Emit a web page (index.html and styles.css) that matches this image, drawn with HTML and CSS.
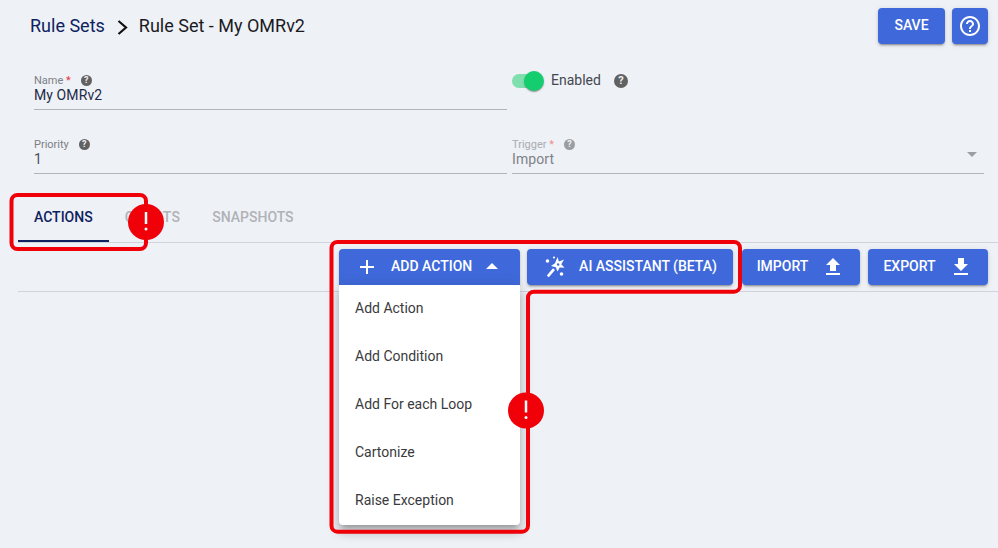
FILE: index.html
```html
<!DOCTYPE html>
<html lang="en">
<head>
<meta charset="utf-8">
<title>Rule Set - My OMRv2</title>
<link rel="stylesheet" href="styles.css">
</head>
<body>
<div class="page">
  <header class="top">
    <nav class="crumbs">
      <span class="crumb-link">Rule Sets</span>
      <svg class="crumb-sep" viewBox="0 0 24 24"><path d="M8.500 7 16 13.500 8.500 20"/></svg>
      <span class="crumb-current">Rule Set - My OMRv2</span>
    </nav>
    <div class="top-actions">
      <button class="btn btn-save"><span>SAVE</span></button>
      <button class="btn btn-help" aria-label="Help">
        <svg viewBox="0 0 24 24" class="help-icon"><path d="M11 18h2v-2h-2v2zm1-16C6.48 2 2 6.48 2 12s4.48 10 10 10 10-4.48 10-10S17.52 2 12 2zm0 18c-4.41 0-8-3.59-8-8s3.59-8 8-8 8 3.59 8 8-3.59 8-8 8zm0-14c-2.21 0-4 1.79-4 4h2c0-1.1.9-2 2-2s2 .9 2 2c0 2-3 1.75-3 5h2c0-2.25 3-2.5 3-5 0-2.21-1.79-4-4-4z"/></svg>
      </button>
    </div>
  </header>

  <section class="form">
    <div class="field">
      <div class="label">Name <span class="req">*</span><span class="q">?</span></div>
      <div class="value">My OMRv2</div>
    </div>
    <div class="toggle-row">
      <span class="switch"><span class="thumb"></span></span>
      <span class="toggle-text">Enabled</span>
      <span class="q q-large">?</span>
    </div>
    <div class="field">
      <div class="label">Priority<span class="q">?</span></div>
      <div class="value value-muted">1</div>
    </div>
    <div class="field field-disabled">
      <div class="label">Trigger <span class="req">*</span><span class="q">?</span></div>
      <div class="value">Import</div>
      <span class="caret"></span>
    </div>
  </section>

  <div class="tabs">
    <div class="tab tab-active">ACTIONS</div>
    <div class="tab tab-wide">CHARTS</div>
    <div class="tab">SNAPSHOTS</div>
  </div>

  <div class="toolbar">
    <div class="menu-anchor">
      <button class="btn btn-add">
        <svg class="ic ic-plus" viewBox="0 0 24 24"><path d="M19 13h-6v6h-2v-6H5v-2h6V5h2v6h6z"/></svg>
        <span class="add-text">ADD ACTION</span>
        <span class="caret-up"></span>
      </button>
      <ul class="menu">
        <li>Add Action</li>
        <li>Add Condition</li>
        <li>Add For each Loop</li>
        <li>Cartonize</li>
        <li>Raise Exception</li>
      </ul>
    </div>
    <button class="btn btn-ai">
      <svg class="ic" viewBox="0 0 24 24">
        <path fill-rule="evenodd" d="M14.500 2 15.900 6.500 21 4.500 18.300 9.200 21.500 12.800 16.700 12.500 14.500 16.500 12.800 12.200 8 11 12 8.200zM14.800 8 13.800 9.500 14.900 11 16.400 10.200 16.200 8.700z"/>
        <path d="M3.800 20.500 10 13.300 12 15 5.800 22.300z"/>
        <circle cx="4.500" cy="6" r="1.800"/>
        <circle cx="11" cy="2.500" r="1.100"/>
        <circle cx="18.500" cy="19" r="1.800"/>
      </svg>
      <span class="ai-text">AI ASSISTANT (BETA)</span>
    </button>
    <button class="btn btn-import">
      <span>IMPORT</span>
      <svg class="ic" viewBox="0 0 24 24"><path d="M9 16h6v-6h4l-7-7-7 7h4zm-4 2h14v2H5z"/></svg>
    </button>
    <button class="btn btn-export">
      <span>EXPORT</span>
      <svg class="ic" viewBox="0 0 24 24"><path d="M19 9h-4V3H9v6H5l7 7 7-7zM5 18v2h14v-2H5z"/></svg>
    </button>
  </div>

  <svg class="callouts" width="998" height="548" viewBox="0 0 998 548">
    <rect x="11.500" y="195" width="134.500" height="54" rx="6" class="callout-line"/>
    <path d="M337.500 242H734a6 6 0 0 1 6 6V285.700a6 6 0 0 1-6 6H534a6 6 0 0 0-6 6V525.700a6 6 0 0 1-6 6H337.500a6 6 0 0 1-6-6V248a6 6 0 0 1 6-6z" class="callout-line"/>
    <circle cx="146" cy="222" r="18" class="callout-dot"/>
    <path d="M146 212v12" class="callout-mark"/><circle cx="146" cy="229" r="1.500" class="callout-point"/>
    <circle cx="526" cy="410.500" r="18" class="callout-dot"/>
    <path d="M526 400.500v12" class="callout-mark"/><circle cx="526" cy="417.500" r="1.500" class="callout-point"/>
  </svg>
</div>
</body>
</html>
```
FILE: styles.css
```css
* { box-sizing: border-box; }
html, body { margin: 0; padding: 0; }
body {
  background: #eef1f6;
  font-family: Roboto, "Liberation Sans", sans-serif;
  color: #212121;
  overflow: hidden;
}
.page { position: relative; width: 998px; height: 548px; overflow: hidden; }

.top {
  display: flex;
  justify-content: space-between;
  align-items: center;
  height: 36px;
  padding: 0 10px 0 30px;
  position: absolute;
  top: 8px; left: 0; right: 0;
}
.crumbs { display: flex; align-items: center; font-size: 18px; line-height: 36px; margin-top: -1px; }
.crumb-link { color: #0f2260; }
.crumb-current { color: #1b1b1f; }
.crumb-sep { width: 24px; height: 24px; margin: 0 5px; fill: none; stroke: #111; stroke-width: 2.2; }
.top-actions { display: flex; gap: 7px; }

.btn {
  display: inline-flex;
  align-items: center;
  justify-content: center;
  height: 36px;
  border: 0;
  border-radius: 4px;
  background: #3f69da;
  color: #fff;
  font-family: inherit;
  font-size: 14px;
  font-weight: 500;
  padding: 0;
  box-shadow: 0 3px 1px -2px rgba(0,0,0,.2), 0 2px 2px 0 rgba(0,0,0,.14), 0 1px 5px 0 rgba(0,0,0,.12);
}
.btn span { position: relative; top: -1px; }
.btn-save { width: 67px; }
.btn-help { width: 36px; }
.help-icon { width: 24px; height: 24px; fill: #fff; }
.ic { width: 24px; height: 24px; fill: #fff; flex: none; }

.form {
  position: absolute;
  top: 72px; left: 34px;
  width: 950px;
  display: grid;
  grid-template-columns: 473px 472px;
  column-gap: 5px;
  grid-auto-rows: 38px;
  row-gap: 26px;
}
.field { position: relative; border-bottom: 1px solid #b1b4ba; }
.label { font-size: 11px; line-height: 16px; margin-top: 1px; color: #7d7f85; display: flex; align-items: center; white-space: pre; }
.req { color: #e8323c; }
.q {
  display: inline-block;
  width: 11px; height: 11px;
  margin-left: 10px;
  border-radius: 50%;
  background: #616161;
  color: #eef1f6;
  font-size: 9px;
  font-weight: 700;
  line-height: 11px;
  text-align: center;
}
.label .q { position: relative; top: -1px; }
.value { font-size: 14px; line-height: 16px; margin-top: -2px; color: #1f2a48; letter-spacing: .1px; }
.value-muted { color: #4c4f55; }
.field-disabled .label { color: #a9acb2; }
.field-disabled .req { color: #ee8d92; }
.field-disabled .q { background: #9b9da1; }
.field-disabled .value { color: #7f8187; }
.caret {
  position: absolute;
  right: 7px; top: 16px;
  border-left: 5px solid transparent;
  border-right: 5px solid transparent;
  border-top: 5px solid #9c9ea3;
}

.toggle-row { display: flex; align-items: flex-start; height: 38px; }
.switch { position: relative; display: block; width: 32px; height: 20px; margin-top: -1px; }
.switch::before {
  content: "";
  position: absolute;
  left: 0; top: 3px;
  width: 28px; height: 14px;
  border-radius: 7px;
  background: #7fdfae;
}
.thumb {
  position: absolute;
  left: 12px; top: 0;
  width: 20px; height: 20px;
  border-radius: 50%;
  background: #14cd6e;
  box-shadow: 0 2px 1px -1px rgba(0,0,0,.2), 0 1px 1px 0 rgba(0,0,0,.14), 0 1px 3px 0 rgba(0,0,0,.12);
}
.toggle-text { margin: -1px 0 0 7px; font-size: 14px; line-height: 18px; color: #44474f; }
.q-large { width: 14px; height: 14px; line-height: 14px; font-size: 11px; margin: 2px 0 0 13px; }

.tabs {
  position: absolute;
  top: 197px; left: 18px; right: 0;
  height: 46px;
  display: flex;
  border-bottom: 1px solid #d0d3d9;
}
.tab {
  padding: 0 16px;
  line-height: 41px;
  font-size: 14px;
  font-weight: 500;
  color: #b0b2b7;
}
.tab-wide { letter-spacing: .3px; }
.tab-active { color: #0f2260; position: relative; }
.tab-active::after {
  content: "";
  position: absolute;
  left: 0; right: 0; bottom: 0;
  height: 2px;
  background: #0f2260;
}

.toolbar {
  position: absolute;
  top: 249px; left: 18px; right: 0;
  height: 43px;
  padding: 0 10px 0 321px;
  display: flex;
  gap: 7px;
  border-bottom: 1px solid #d0d3d9;
}
.menu-anchor { position: relative; width: 181px; }
.btn-add { width: 181px; justify-content: flex-start; border-radius: 4px 4px 0 0; padding-left: 16px; }
.add-text { margin-left: 12px; }
.btn .caret-up {
  margin-left: 14px;
  top: -1px;
  border-left: 6px solid transparent;
  border-right: 6px solid transparent;
  border-bottom: 6px solid #fff;
}
.btn-ai { width: 206px; }
.ai-text { margin-left: 12px; }
.btn-import { width: 118px; margin-left: 2px; }
.btn-import .ic, .btn-export .ic { margin-left: 13px; }
.btn-export { width: 120px; margin-left: 1px; }

.menu {
  position: absolute;
  top: 36px; left: 0;
  width: 181px;
  margin: 0; padding: 0;
  list-style: none;
  background: #fff;
  border-radius: 0 0 4px 4px;
  box-shadow: 0 5px 5px -3px rgba(0,0,0,.2), 0 8px 10px 1px rgba(0,0,0,.14), 0 3px 14px 2px rgba(0,0,0,.12);
}
.menu li { height: 48px; padding-left: 16px; font-size: 14px; line-height: 46px; color: #3a3a3d; }

.callouts { position: absolute; top: 0; left: 0; pointer-events: none; }
.callout-line { fill: none; stroke: #f00008; stroke-width: 4; }
.callout-dot { fill: #f00008; }
.callout-mark { stroke: #fff; stroke-width: 2.500; fill: none; }
.callout-point { fill: #fff; }
```
